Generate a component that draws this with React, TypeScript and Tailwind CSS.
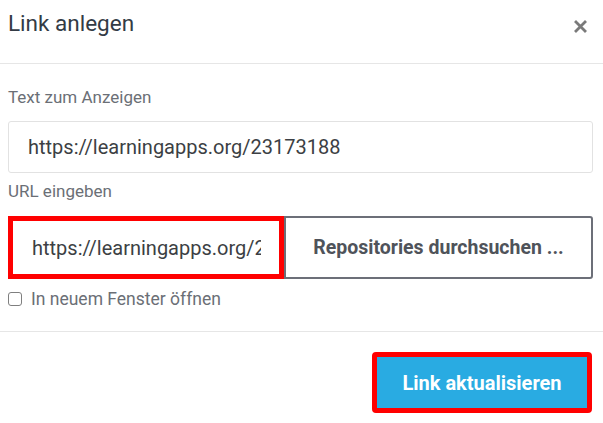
import { useState } from 'react'

export default function App() {
  const [text, setText] = useState('https://learningapps.org/23173188')
  const [url, setUrl] = useState('https://learningapps.org/23173188')
  const [newWindow, setNewWindow] = useState(false)

  return (
    <div className="w-[603px] h-[423px] bg-white overflow-hidden font-['Roboto','Liberation_Sans',sans-serif]">
      {/* Kopfzeile */}
      <div className="h-[64px] flex items-start justify-between pl-[8px] pr-[16px] pt-[9px] border-b border-[#e6e6e6]">
        <h1 className="text-[22.5px] leading-[28px] text-[#333b45]">Link anlegen</h1>
        <button className="mt-[11px] w-[13px] h-[13px] flex items-center justify-center">
          <svg width="13" height="13" viewBox="0 0 13 13">
            <path d="M2 2 L11 11 M11 2 L2 11" stroke="#7a7a7a" strokeWidth="2.8" strokeLinecap="square" />
          </svg>
        </button>
      </div>

      {/* Formular */}
      <div className="pl-[8px] pr-[10px] pt-[23px]">
        <label className="block text-[17px] leading-[20px] text-[#6b6f76]">Text zum Anzeigen</label>
        <input
          value={text}
          onChange={e => setText(e.target.value)}
          className="mt-[14px] w-full h-[52px] border border-[#e2e2e2] rounded-[3px] pl-[19px] text-[20px] text-[#3c3f44] outline-none"
        />

        <label className="block mt-[8px] text-[17px] leading-[20px] text-[#6b6f76]">URL eingeben</label>
        <div className="mt-[15px] flex h-[63px]">
          <input
            value={url}
            onChange={e => setUrl(e.target.value)}
            className="w-[276px] h-full border-[5px] border-[#ff0000] pl-[19px] pr-[18px] text-[20px] text-[#3c3f44] outline-none"
          />
          <button className="flex-1 h-full border-2 border-[#6c6f78] rounded-r-[3px] text-[19.5px] font-bold text-[#4f535a]">
            Repositories durchsuchen ...
          </button>
        </div>

        <label className="mt-[10px] flex items-center gap-[9px] h-[20px] text-[17.5px] text-[#6b6f76]">
          <input
            type="checkbox"
            checked={newWindow}
            onChange={e => setNewWindow(e.target.checked)}
            className="appearance-none shrink-0 w-[14px] h-[14px] border border-[#7f7f7f] rounded-[3px] bg-white"
          />
          In neuem Fenster öffnen
        </label>
      </div>

      {/* Fußzeile */}
      <div className="mt-[22px] border-t border-[#e6e6e6] pt-[20px] pr-[11px] flex justify-end">
        <button className="w-[220px] h-[61px] border-[5px] border-[#ff0000] rounded-[4px] bg-[#29abe2] text-white text-[20px] font-bold">
          Link aktualisieren
        </button>
      </div>
    </div>
  )
}
